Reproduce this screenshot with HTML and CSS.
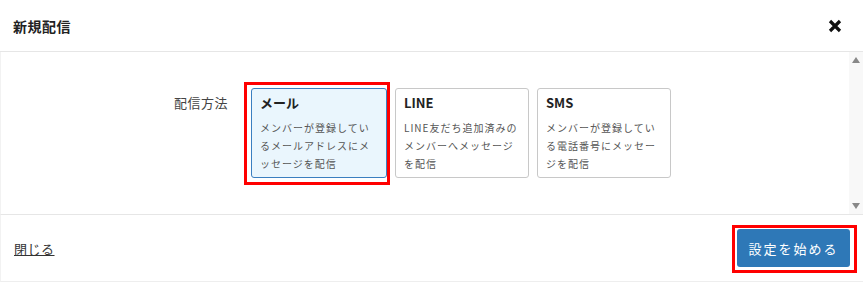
FILE: index.html
```html
<!DOCTYPE html>
<html lang="ja">
<head>
<meta charset="utf-8">
<title>新規配信</title>
<link rel="stylesheet" href="styles.css">
</head>
<body>
<div class="modal">
  <div class="header">
    <div class="title">新規配信</div>
    <div class="close">
      <svg width="14" height="14" viewBox="0 0 14 14"><path d="M2 2 L12 12 M12 2 L2 12" stroke="#111" stroke-width="3.2" stroke-linecap="butt"/></svg>
    </div>
  </div>
  <div class="body">
    <div class="content">
      <div class="field">
        <div class="label">配信方法</div>
        <div class="cards">
          <div class="card selected">
            <div class="card-title">メール</div>
            <div class="card-desc">メンバーが登録しているメールアドレスにメッセージを配信</div>
          </div>
          <div class="card">
            <div class="card-title">LINE</div>
            <div class="card-desc">LINE友だち追加済みのメンバーへメッセージを配信</div>
          </div>
          <div class="card">
            <div class="card-title">SMS</div>
            <div class="card-desc">メンバーが登録している電話番号にメッセージを配信</div>
          </div>
        </div>
      </div>
    </div>
    <div class="scrollbar">
      <span class="arrow up"></span>
      <span class="arrow down"></span>
    </div>
  </div>
  <div class="footer">
    <a class="close-link" href="#">閉じる</a>
    <button class="primary">設定を始める</button>
  </div>
  <div class="mark mark-card"></div>
  <div class="mark mark-button"></div>
</div>
</body>
</html>
```
FILE: styles.css
```css
* { box-sizing: border-box; }
html, body { margin: 0; padding: 0; background: #fff; }
body {
  font-family: "Noto Sans CJK JP", "Noto Sans", sans-serif;
  color: #333;
  width: 863px;
  height: 283px;
  overflow: hidden;
}
.modal { position: relative; width: 863px; height: 283px; }
.header {
  height: 52px;
  border-bottom: 1px solid #e6e6e6;
  display: flex;
  align-items: center;
  justify-content: space-between;
  padding: 0 21px 0 13px;
}
.title { font-size: 14px; font-weight: bold; color: #222; letter-spacing: 0.5px; }
.close { display: flex; align-items: center; }
.body {
  height: 163px;
  display: flex;
  border-bottom: 1px solid #e6e6e6;
  border-left: 1px solid #f2f2f2;
}
.content { flex: 1; padding: 36px 0 0 173px; }
.field { display: flex; align-items: flex-start; }
.label { font-size: 13px; line-height: 16px; padding-top: 7px; width: 77px; color: #444; letter-spacing: 0.5px; }
.cards { display: flex; gap: 8px; }
.card {
  width: 134px;
  height: 90px;
  border: 1px solid #c8c8c8;
  border-radius: 3px;
  background: #fff;
  padding: 6px 8px 0 8px;
}
.card.selected { width: 136px; border-color: #3b7fc0; background: #eaf6fd; }
.card-title { font-size: 13px; font-weight: bold; line-height: 16px; color: #222; }
.card-desc {
  margin-top: 8px;
  font-size: 10px;
  letter-spacing: 1px;
  line-height: 18px;
  color: #555;
}
.scrollbar {
  width: 14px;
  background: #f8f8f8;
  display: flex;
  flex-direction: column;
  justify-content: space-between;
  align-items: center;
  padding: 5px 0 5px 0;
}
.arrow { width: 0; height: 0; border-left: 4px solid transparent; border-right: 4px solid transparent; }
.arrow.up { border-bottom: 6px solid #888; }
.arrow.down { border-top: 6px solid #888; }
.footer {
  height: 67px;
  border-bottom: 1px solid #eeeeee;
  border-left: 1px solid #f2f2f2;
  display: flex;
  align-items: center;
  justify-content: space-between;
  padding: 0 13px 0 13px;
}
.close-link { font-size: 13px; color: #333; text-decoration: underline; letter-spacing: 0.5px; }
.primary {
  width: 113px;
  height: 38px;
  background: #2e78b7;
  border: none;
  border-radius: 3px;
  color: #fff;
  font-family: inherit;
  font-size: 13px;
  letter-spacing: 2px;
  padding: 0;
}
.mark { position: absolute; border: 3px solid #f00; }
.mark-card { left: 244px; top: 82px; width: 146px; height: 103px; }
.mark-button { left: 732px; top: 225px; width: 125px; height: 48px; }
```
